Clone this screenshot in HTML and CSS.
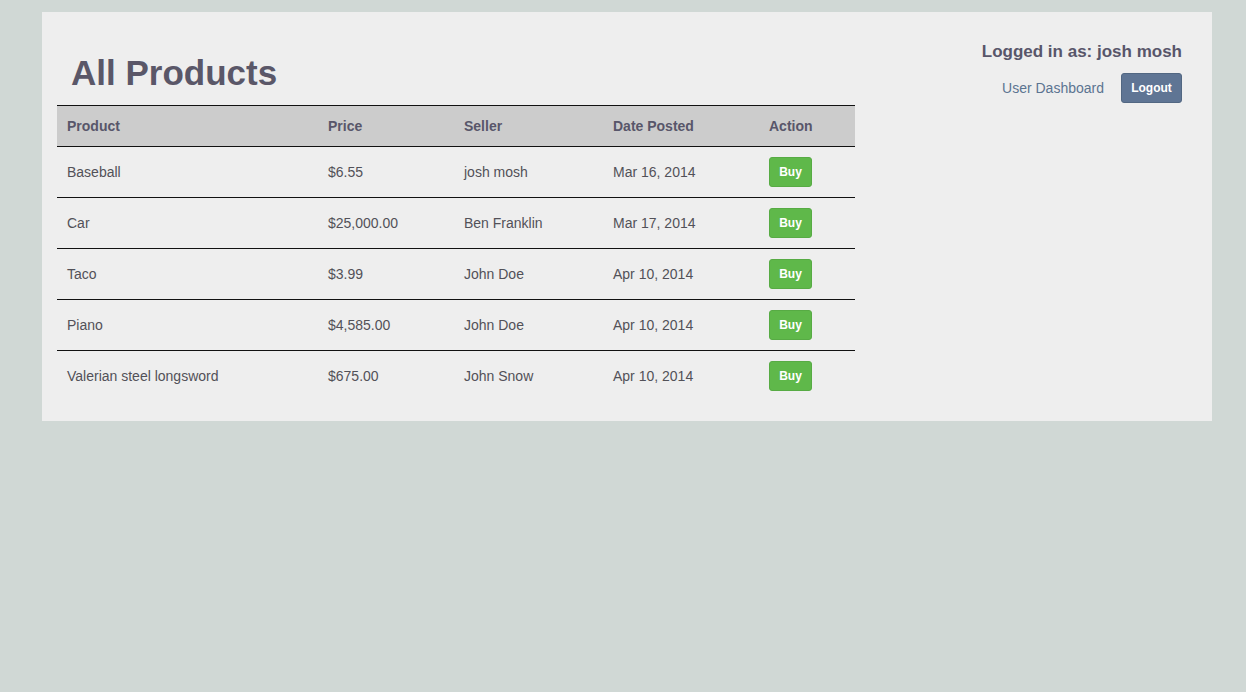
FILE: index.html
```html
<!DOCTYPE html>
<html>
<head>
<meta charset="utf-8">
<link rel="stylesheet" href="styles.css">
</head>
<body>
<div class="page">
  <div class="main">
    <h1 class="title">All Products</h1>
    <table class="products">
      <thead>
        <tr><th class="c1">Product</th><th class="c2">Price</th><th class="c3">Seller</th><th class="c4">Date Posted</th><th class="c5">Action</th></tr>
      </thead>
      <tbody>
        <tr><td>Baseball</td><td>$6.55</td><td>josh mosh</td><td>Mar 16, 2014</td><td><button class="buy">Buy</button></td></tr>
        <tr><td>Car</td><td>$25,000.00</td><td>Ben Franklin</td><td>Mar 17, 2014</td><td><button class="buy">Buy</button></td></tr>
        <tr><td>Taco</td><td>$3.99</td><td>John Doe</td><td>Apr 10, 2014</td><td><button class="buy">Buy</button></td></tr>
        <tr><td>Piano</td><td>$4,585.00</td><td>John Doe</td><td>Apr 10, 2014</td><td><button class="buy">Buy</button></td></tr>
        <tr><td>Valerian steel longsword</td><td>$675.00</td><td>John Snow</td><td>Apr 10, 2014</td><td><button class="buy">Buy</button></td></tr>
      </tbody>
    </table>
  </div>
  <div class="side">
    <div class="logged">Logged in as: josh mosh</div>
    <div class="actions">
      <a class="dash" href="#">User Dashboard</a>
      <button class="logout">Logout</button>
    </div>
  </div>
</div>
</body>
</html>
```
FILE: styles.css
```css
html, body {
  margin: 0;
  padding: 0;
  background: #d0d8d5;
  font-family: "Liberation Sans", Arial, sans-serif;
  color: #58566a;
}
.page {
  margin: 12px 0 0 42px;
  width: 1170px;
  background: #eeeeee;
  display: flex;
  justify-content: space-between;
  padding-bottom: 20px;
}
.main {
  padding-left: 15px;
  width: 798px;
}
.title {
  margin: 0;
  padding: 31px 0 0 14px;
  font-size: 35px;
  line-height: 59px;
  height: 62px;
  font-weight: bold;
  color: #5a5768;
}
.products {
  border-collapse: collapse;
  width: 798px;
  font-size: 14px;
  table-layout: fixed;
  color: #525158;
}
.products th {
  background: #cccccc;
  text-align: left;
  font-weight: bold;
  height: 41px;
  padding: 0 10px;
  border-top: 1px solid #111;
  border-bottom: 1px solid #111;
  box-sizing: border-box;
  color: #58566a;
}
.c1 { width: 261px; }
.c2 { width: 136px; }
.c3 { width: 149px; }
.c4 { width: 156px; }
.c5 { width: 96px; }
.products td {
  height: 50px;
  padding: 0 10px;
  vertical-align: middle;
}
.products tbody tr + tr td {
  border-top: 1px solid #111;
}
.buy {
  width: 43px;
  height: 30px;
  background: #5fb84a;
  border: 1px solid #57ab44;
  border-radius: 3px;
  color: #fff;
  font-family: "Liberation Sans", Arial, sans-serif;
  font-weight: bold;
  font-size: 12px;
  padding: 0;
  display: block;
}
.side {
  padding: 29px 30px 0 0;
  display: flex;
  flex-direction: column;
  align-items: flex-end;
}
.logged {
  font-size: 17px;
  font-weight: bold;
  line-height: 22px;
  color: #58566a;
}
.actions {
  margin-top: 10px;
  display: flex;
  align-items: center;
  gap: 17px;
}
.dash {
  color: #5b7491;
  font-size: 14px;
  text-decoration: none;
}
.logout {
  width: 61px;
  height: 30px;
  background: #5f7594;
  border: 1px solid #526782;
  border-radius: 3px;
  color: #fff;
  font-family: "Liberation Sans", Arial, sans-serif;
  font-weight: bold;
  font-size: 12px;
  padding: 0;
}
```
